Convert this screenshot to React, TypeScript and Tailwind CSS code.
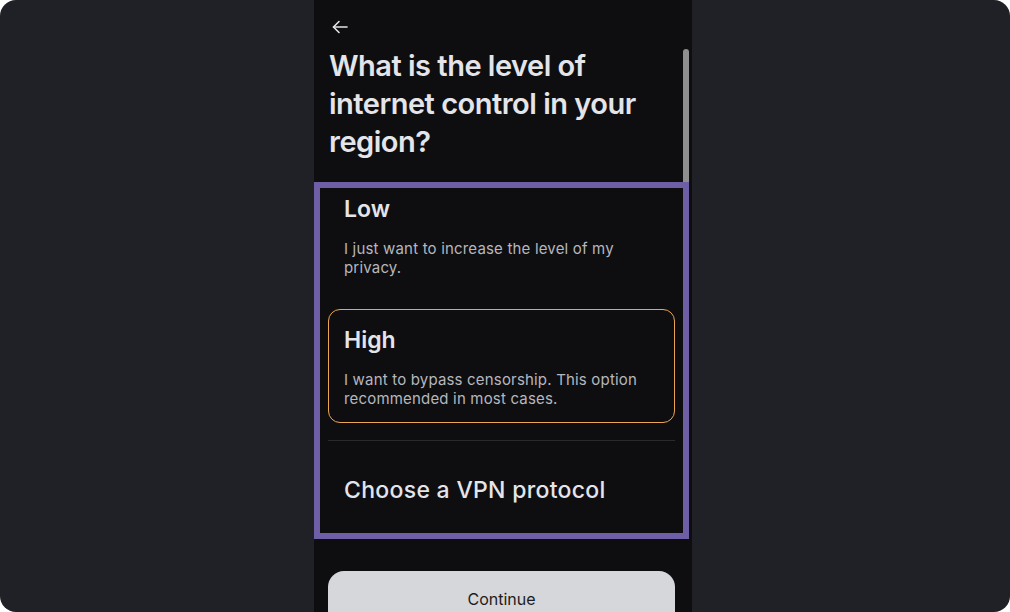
import React from "react";

export default function App() {
  return (
    <div className="w-[1010px] h-[612px] bg-white" style={{ fontFamily: "Inter, 'Noto Sans', sans-serif" }}>
      <div className="w-full h-full rounded-[16px] bg-[#202126] overflow-hidden pl-[314px]">
        <div className="w-[378px] h-full bg-[#0e0e10] relative flex flex-col overflow-hidden">
          {/* scrollbar */}
          <div className="absolute left-[369px] top-[49px] w-[6px] h-[140px] rounded-t-[3px] bg-[#8f8f8f]" />
          {/* header */}
          <div className="shrink-0 h-[47px] pl-[18px] pt-[20px]">
            <svg width="16" height="14" viewBox="0 0 16 14" fill="none" stroke="#e4e4e8" strokeWidth="1.6" strokeLinecap="round" strokeLinejoin="round">
              <path d="M15 7H1.5" />
              <path d="M7 1.5L1.5 7L7 12.5" />
            </svg>
          </div>
          <h1 className="shrink-0 pl-[15px] pr-[30px] text-[29px] leading-[38px] font-semibold text-[#e3e5ea] tracking-[-0.5px]">
            What is the level of internet control in your region?
          </h1>
          {/* options list (highlighted) */}
          <div className="shrink-0 mt-[21px] w-[375px] h-[357px] border-[6px] border-[#6e5ea6] overflow-hidden relative">
            <div className="-mt-[10px] px-[8px] flex flex-col">
              <div className="rounded-[12px] border border-transparent pl-[15px] pr-[15px] pt-[16px] pb-[14px]">
                <div className="text-[23px] leading-[28px] font-semibold text-[#e4e5ea]">Low</div>
                <div className="mt-[16px] text-[15px] leading-[19px] tracking-[0.18px] text-[#b6b7be]">
                  I just want to increase the level of my privacy.
                </div>
              </div>
              <div className="mt-[17px] rounded-[12px] border border-[#eea553] pl-[15px] pr-[15px] pt-[16px] pb-[14px]">
                <div className="text-[23px] leading-[28px] font-semibold text-[#e4e5ea]">High</div>
                <div className="mt-[16px] text-[15px] leading-[19px] tracking-[0.18px] text-[#b6b7be]">
                  I want to bypass censorship. This option recommended in most cases.
                </div>
              </div>
              <div className="mt-[17px] h-px bg-[#2a2a2e]" />
              <div className="pl-[16px] pt-[35px] text-[23px] leading-[28px] font-medium tracking-[0.3px] text-[#e4e5ea]">
                Choose a VPN protocol
              </div>
            </div>
          </div>
          <div className="shrink-0 mt-[32px] ml-[14px] w-[347px] h-[56px] rounded-[16px] bg-[#d6d7db] flex items-center justify-center text-[16px] font-normal text-[#1c1c21]">
            Continue
          </div>
        </div>
      </div>
    </div>
  );
}
